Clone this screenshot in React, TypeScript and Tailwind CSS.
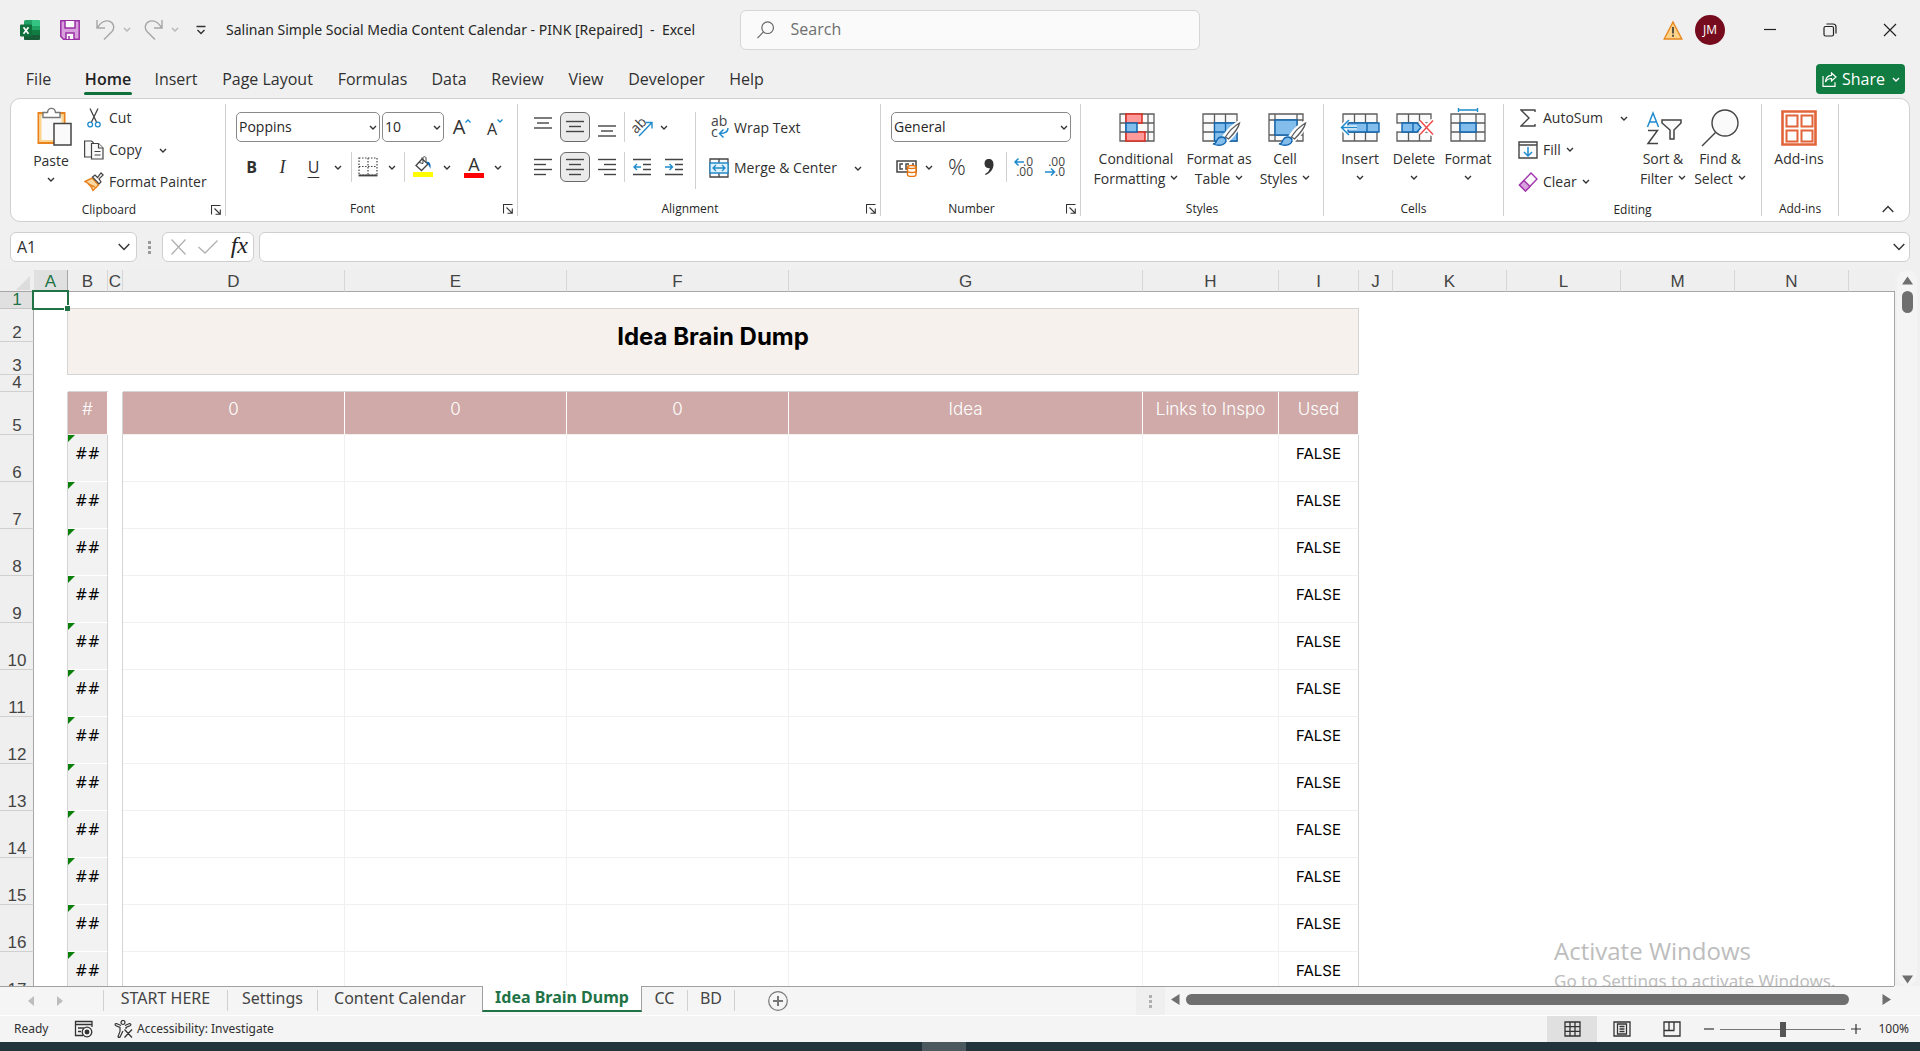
import type { ReactNode } from "react";
import clsx from "clsx";

const INK = "#444444";
const BLUE = "#1e8bcd";

const menuTabs = [
  { name: "File", width: "w-[49px] mr-[10px]" },
  { name: "Home", width: "w-[70px]", active: true },
  { name: "Insert", width: "w-[66px]" },
  { name: "Page Layout", width: "w-[117px]" },
  { name: "Formulas", width: "w-[93px]" },
  { name: "Data", width: "w-[60px]" },
  { name: "Review", width: "w-[77px]" },
  { name: "View", width: "w-[60px]" },
  { name: "Developer", width: "w-[101px]" },
  { name: "Help", width: "w-[59px]" },
];

const columns = [
  { name: "A", width: "w-[34px]" },
  { name: "B", width: "w-[40px]" },
  { name: "C", width: "w-[15px]" },
  { name: "D", width: "w-[222px]" },
  { name: "E", width: "w-[222px]" },
  { name: "F", width: "w-[222px]" },
  { name: "G", width: "w-[354px]" },
  { name: "H", width: "w-[136px]" },
  { name: "I", width: "w-[80px]" },
  { name: "J", width: "w-[34px]" },
  { name: "K", width: "w-[114px]" },
  { name: "L", width: "w-[114px]" },
  { name: "M", width: "w-[114px]" },
  { name: "N", width: "w-[114px]" },
];

const sheetTabs = [
  { name: "START HERE", width: "w-[124px]" },
  { name: "Settings", width: "w-[90px]" },
  { name: "Content Calendar", width: "w-[164px]" },
  { name: "Idea Brain Dump", width: "w-[160px]", active: true },
  { name: "CC", width: "w-[46px]" },
  { name: "BD", width: "w-[47px]" },
];

const headings = ["0", "0", "0", "Idea", "Links to Inspo", "Used"];
const dataRows = [6, 7, 8, 9, 10, 11, 12, 13, 14, 15, 16, 17];

function Chevron({ color = "#333333" }: { color?: string }) {
  return (
    <svg width="8" height="5" viewBox="0 0 8 5" fill="none" className="shrink-0">
      <path d="M1 1l3 3 3-3" stroke={color} strokeWidth="1.4" />
    </svg>
  );
}

function BigChevron({ up = false }: { up?: boolean }) {
  return (
    <svg width="12" height="8" viewBox="0 0 12 8" fill="none" className={clsx("shrink-0", up && "rotate-180")}>
      <path d="M0.7 1l5.3 5.4L11.3 1" stroke="#333333" strokeWidth="1.4" />
    </svg>
  );
}

function Drop({ label, className }: { label: string; className: string }) {
  return (
    <button aria-label={label} className={clsx("flex h-[30px] items-center justify-center", className)}>
      <Chevron />
    </button>
  );
}

function IconButton({
  label,
  className = "w-8",
  pressed = false,
  children,
}: {
  label: string;
  className?: string;
  pressed?: boolean;
  children: ReactNode;
}) {
  return (
    <button
      aria-label={label}
      className={clsx(
        "flex h-[30px] shrink-0 items-center justify-center",
        className,
        pressed && "rounded-md border border-[#6a6a6a] bg-[#ebebeb]",
      )}
    >
      {children}
    </button>
  );
}

function Divider({ className = "" }: { className?: string }) {
  return <div className={clsx("w-px shrink-0 bg-[#d1d1d1]", className)} />;
}

function Launcher({ label }: { label: string }) {
  return (
    <button aria-label={label} className="flex w-[18px] items-center justify-center">
      <svg width="10" height="10" viewBox="0 0 10 10" fill="none" stroke="#333333" strokeWidth="1.1">
        <path d="M0.5 9.5v-9h9M3.5 3.5l5.5 5.5M9.3 4.5v4.8H4.5" />
      </svg>
    </button>
  );
}

function Group({
  name,
  width,
  launcher = false,
  children,
}: {
  name: string;
  width: string;
  launcher?: boolean;
  children: ReactNode;
}) {
  return (
    <>
      <section aria-label={name} className={clsx("flex shrink-0 flex-col pt-[3px]", width)}>
        <div className="flex h-24">{children}</div>
        <div className="flex h-6 text-xs text-[#262626]">
          <span className="flex-1 text-center leading-6">{name}</span>
          {launcher && <Launcher label={`${name} settings`} />}
        </div>
      </section>
      <Divider className="my-[5px]" />
    </>
  );
}

function RowButton({ icon, text, drop }: { icon: ReactNode; text: string; drop?: string }) {
  return (
    <button className="flex h-8 items-center gap-[5px] whitespace-nowrap">
      <span className="flex w-5 justify-center">{icon}</span>
      <span>{text}</span>
      {drop && (
        <span className={drop}>
          <Chevron />
        </span>
      )}
    </button>
  );
}

function BigButton({
  icon,
  lines,
  width,
  drop = true,
}: {
  icon: ReactNode;
  lines: string[];
  width: string;
  drop?: boolean;
}) {
  return (
    <button className={clsx("flex shrink-0 flex-col items-center pt-[5px] leading-5 whitespace-nowrap", width)}>
      <span className="flex h-[42px] items-center justify-center">{icon}</span>
      {lines.length === 1 ? (
        <>
          <span>{lines[0]}</span>
          {drop && (
            <span className="flex h-4 items-center">
              <Chevron />
            </span>
          )}
        </>
      ) : (
        <>
          <span>{lines[0]}</span>
          <span className="flex items-center gap-[5px]">
            {lines[1]}
            <span className="pb-1">
              <Chevron />
            </span>
          </span>
        </>
      )}
    </button>
  );
}

function Combo({ label, value, width }: { label: string; value: string; width: string }) {
  return (
    <label className={clsx("relative flex h-[30px] shrink-0 items-center", width)}>
      <select
        aria-label={label}
        className="h-full w-full appearance-none rounded-[5px] border border-[#8a8a8a] bg-white pl-[2px] text-[#262626]"
      >
        <option>{value}</option>
      </select>
      <span className="pointer-events-none absolute right-[3px]">
        <Chevron />
      </span>
    </label>
  );
}

function Lines({ rows }: { rows: [number, number, number][] }) {
  return (
    <svg width="18" height="20" viewBox="0 0 18 20" stroke={INK} strokeWidth="1.4">
      {rows.map(([y, x1, x2]) => (
        <path key={y} d={`M${x1} ${y}H${x2}`} />
      ))}
    </svg>
  );
}

function IndentIcon({ right = false }: { right?: boolean }) {
  return (
    <svg width="18" height="20" viewBox="0 0 18 20" fill="none" strokeWidth="1.4">
      <path d="M0 2.5h18M10 7.5h8M10 12.5h8M0 17.5h18" stroke={INK} />
      <path d={right ? "M0 10h7.5M4.5 7l3 3-3 3" : "M8 10H0.8M4 7l-3 3 3 3"} stroke={BLUE} />
    </svg>
  );
}

function GridLines() {
  return (
    <g fill="#fafafa" stroke="#5c5c5c" strokeWidth="1.3">
      <path d="M1 3h34v27H1z" />
      <path d="M1 12h34M1 21h34M12.5 3v27M23.5 3v27" fill="none" />
    </g>
  );
}

function Brush() {
  return (
    <g>
      <path d="M38 11c-5 2-12 9-16 15l4 3c5-5 11-13 12-18z" fill="#ffffff" stroke="#ffffff" strokeWidth="4" />
      <path d="M37.5 12c-5 3-11 9-14 14l3 2c5-5 10-11 11-16z" fill="#ffffff" stroke="#5c5c5c" strokeWidth="1.3" />
      <path d="M11 33c3 0 3-2 4-4 2-4 8-4 9 0 0 4-5 7-13 4z" fill="#83bdec" stroke="#1166b0" strokeWidth="1.3" />
    </g>
  );
}

function TitleBar() {
  return (
    <header className="flex h-[60px] shrink-0 pb-[1px]">
      <div className="flex w-[740px] shrink-0 items-center pl-5">
        <svg width="20" height="20" viewBox="0 0 20 20">
          <rect x="4" width="16" height="20" rx="1.5" fill="#21a366" />
          <path d="M12 0h6.5A1.5 1.5 0 0 1 20 1.5V6h-8z" fill="#33c481" />
          <path d="M4 5h8v5H4z" fill="#107c41" />
          <path d="M12 10h8v8.5a1.5 1.5 0 0 1-1.5 1.5H5.5A1.5 1.5 0 0 1 4 18.5V10z" fill="#185c37" />
          <path d="M12 10h8v5h-8z" fill="#107c41" />
          <rect y="4.5" width="12" height="12" rx="1" fill="#0f703b" />
          <path d="M3.5 7.2l5 6.6M8.5 7.2l-5 6.6" stroke="#ffffff" strokeWidth="1.7" />
        </svg>
        <button aria-label="Save" className="ml-5">
          <svg width="20" height="20" viewBox="0 0 20 20" fill="#d8a0dc" stroke="#9a2fa5" strokeWidth="1.5">
            <path d="M0.8 0.8h18.4v18.4H3.5l-2.7-2.7z" />
            <path d="M5 1v7h10V1M6 19v-6h8v6" fill="#fafafa" />
            <path d="M9 16v3" />
          </svg>
        </button>
        <button aria-label="Undo" className="ml-4">
          <svg width="19" height="20" viewBox="0 0 19 20" fill="none" stroke="#a6a6a6" strokeWidth="1.4">
            <path d="M1 0v8h8M1.5 7.5C5 2 9 0 13 1.2c5 1.5 6 7 3 10.3L8 19.5" />
          </svg>
        </button>
        <button aria-label="Undo list" className="ml-2">
          <Chevron color="#b5b5b5" />
        </button>
        <button aria-label="Redo" className="ml-[13px]">
          <svg width="19" height="20" viewBox="0 0 19 20" fill="none" stroke="#a6a6a6" strokeWidth="1.4">
            <path d="M18 0v8h-8M17.5 7.5C14 2 10 0 6 1.2c-5 1.500-6 7-3 10.3L11 19.5" />
          </svg>
        </button>
        <button aria-label="Redo list" className="ml-2">
          <Chevron color="#b5b5b5" />
        </button>
        <button aria-label="Customize toolbar" className="ml-[17px]">
          <svg width="10" height="10" viewBox="0 0 10 10" fill="none" stroke="#333333" strokeWidth="1.4">
            <path d="M0.5 1.5h9M1.5 5L5 8.5 8.5 5" />
          </svg>
        </button>
        <h1 className="ml-5 pt-[1px] font-['Noto_Sans',sans-serif] text-sm whitespace-pre text-[#262626]">
          {"Salinan Simple Social Media Content Calendar - PINK [Repaired]  -  Excel"}
        </h1>
      </div>
      <label className="mt-[10px] flex h-10 w-[460px] min-w-0 items-center rounded-md border border-[#d6d6d6] bg-[#fafafa] pl-4">
        <svg width="19" height="20" viewBox="0 0 19 20" fill="none" stroke="#666666" strokeWidth="1.3">
          <circle cx="11.5" cy="7.5" r="6.3" />
          <path d="M7 12L0.5 18.8" />
        </svg>
        <input
          aria-label="Search"
          placeholder="Search"
          className="ml-4 w-full bg-transparent pb-[2px] text-base outline-none placeholder:text-[#6e6e6e]"
        />
      </label>
      <div className="ml-auto flex items-center">
        <button aria-label="Warning">
          <svg width="20" height="20" viewBox="0 0 20 20">
            <path d="M10 2l8.8 17H1.2z" fill="#fbd38a" stroke="#e8871e" strokeWidth="1.4" />
            <path d="M10 7v6.5M10 14.8v2" stroke="#333333" strokeWidth="1.6" />
          </svg>
        </button>
        <button className="ml-3 h-[30px] w-[30px] rounded-full bg-[#750b1c] text-xs text-white">JM</button>
        <button aria-label="Minimize" className="ml-[15px] flex h-10 w-[60px] items-center justify-center">
          <svg width="12" height="12" viewBox="0 0 12 12" stroke="#222222" strokeWidth="1.2">
            <path d="M0 5.5h12" />
          </svg>
        </button>
        <button aria-label="Restore" className="flex h-10 w-[60px] items-center justify-center">
          <svg width="14" height="14" viewBox="0 0 14 14" fill="none" stroke="#222222" strokeWidth="1.2">
            <rect x="1" y="3.5" width="9.5" height="9.5" rx="1.5" />
            <path d="M3.5 1h6.5a3 3 0 0 1 3 3v6.5" />
          </svg>
        </button>
        <button aria-label="Close" className="flex h-10 w-[60px] items-center justify-center">
          <svg width="14" height="14" viewBox="0 0 14 14" stroke="#222222" strokeWidth="1.2">
            <path d="M1 1l12 12M13 1L1 13" />
          </svg>
        </button>
      </div>
    </header>
  );
}

function MenuBar() {
  return (
    <nav className="flex h-[38px] shrink-0 pr-[15px] pl-[14px]">
      {menuTabs.map((tab) => (
        <button
          key={tab.name}
          className={clsx("flex flex-col items-center pt-[7px] text-base leading-6 text-[#303030]", tab.width)}
        >
          <span className={tab.active ? "font-semibold text-[#222222]" : ""}>{tab.name}</span>
          {tab.active && <span className="mt-[1px] h-[3px] w-12 rounded-sm bg-[#0f703b]" />}
        </button>
      ))}
      <button className="mt-1 ml-auto flex h-[30px] w-[89px] items-center rounded-[4px] bg-[#107c41] pl-[6px] text-base text-white">
        <svg width="15" height="15" viewBox="0 0 15 15" fill="none" stroke="#ffffff" strokeWidth="1.2">
          <path d="M1 4v10.3h12v-4M9.5 1l4.5 4-4.5 4V6.5C6 6.500 4.5 8 3.5 10c.2-4 2.5-6.5 6-6.7z" />
        </svg>
        <span className="ml-[5px] flex-1 text-left">Share</span>
        <span className="mr-[5px]">
          <Chevron color="#ffffff" />
        </span>
      </button>
    </nav>
  );
}

function ClipboardGroup() {
  return (
    <Group name="Clipboard" width="w-[214px]" launcher>
      <button className="ml-[15px] flex w-[50px] flex-col items-center pt-[5px]">
        <svg width="36" height="40" viewBox="0 0 36 40" fill="none" className="ml-[5px]">
          <path d="M2.5 6h26v30h-26z" fill="#fff" stroke="#e8821e" strokeWidth="2" />
          <path d="M4.5 8h22v26h-22z" fill="#fafafa" stroke="#fbd38a" strokeWidth="2" />
          <path d="M7 10.5V5.5h4.5c.5-5.5 7.5-5.5 8 0H24v5z" fill="#ffffff" stroke="#777777" strokeWidth="1.4" />
          <path d="M18 16.5h17V38H18z" fill="#fafafa" stroke="#444444" strokeWidth="1.5" />
        </svg>
        <span className="pt-1 leading-5">Paste</span>
        <span className="flex h-4 items-center">
          <Chevron />
        </span>
      </button>
      <div className="ml-2 flex flex-col">
        <RowButton
          text="Cut"
          icon={
            <svg width="14" height="20" viewBox="0 0 14 20" fill="none" strokeWidth="1.3">
              <path d="M3 0.5l6.5 13.5M11 0.5L4.5 14" stroke={INK} />
              <circle cx="3.2" cy="16.5" r="2.4" stroke={BLUE} />
              <circle cx="10.8" cy="16.5" r="2.4" stroke={BLUE} />
            </svg>
          }
        />
        <RowButton
          text="Copy"
          drop="ml-3"
          icon={
            <svg width="20" height="20" viewBox="0 0 20 20" fill="#fafafa" stroke={INK} strokeWidth="1.2">
              <path d="M7 17H0.6V1h7l2 2" />
              <path d="M7.5 3.5h7l4.5 4.5v11H7.5z" />
              <path d="M14.5 3.5V8H19M10.5 11.5h6M10.5 15h6" />
            </svg>
          }
        />
        <RowButton
          text="Format Painter"
          icon={
            <svg width="20" height="20" viewBox="0 0 20 20" fill="none">
              <path d="M1 9.5l7-3.5 6.500 7L9 18.5C7 13.5 4.5 11 1 9.5z" fill="#fbd9a4" stroke="#e8821e" strokeWidth="1.4" />
              <path d="M4 12l7 3" stroke="#e8821e" strokeWidth="1.4" />
              <path d="M8.5 5l2.5-2 2.5 2.5L17 1l2.2 2L15 6.8l2 3-2 2z" fill="#fafafa" stroke="#444444" strokeWidth="1.2" />
            </svg>
          }
        />
      </div>
    </Group>
  );
}

function FontGroup() {
  return (
    <Group name="Font" width="w-[291px]" launcher>
      <div className="flex flex-col gap-[10px] pt-[10px] pl-[10px]">
        <div className="flex gap-[2px]">
          <Combo label="Font name" value="Poppins" width="w-36" />
          <Combo label="Font size" value="10" width="w-[62px]" />
          <IconButton label="Increase font size" className="w-8">
            <span className="text-xl">A</span>
            <svg width="6" height="4" viewBox="0 0 6 4" fill="none" className="mb-3">
              <path d="M0.5 3.5L3 1l2.5 2.5" stroke={BLUE} strokeWidth="1.3" />
            </svg>
          </IconButton>
          <IconButton label="Decrease font size" className="w-[30px]">
            <span className="pt-1 text-base">A</span>
            <svg width="6" height="4" viewBox="0 0 6 4" fill="none" className="mb-3">
              <path d="M0.5 0.5L3 3l2.5-2.5" stroke={BLUE} strokeWidth="1.3" />
            </svg>
          </IconButton>
        </div>
        <div className="flex">
          <IconButton label="Bold" className="w-[31px]">
            <span className="text-base font-bold">B</span>
          </IconButton>
          <IconButton label="Italic" className="w-[31px]">
            <span className="font-['Liberation_Serif',serif] text-lg italic">I</span>
          </IconButton>
          <IconButton label="Underline" className="w-[31px]">
            <span className="text-base underline underline-offset-4">U</span>
          </IconButton>
          <Drop label="Underline styles" className="w-[18px]" />
          <Divider className="mx-1" />
          <IconButton label="Borders" className="w-6">
            <svg width="20" height="20" viewBox="0 0 20 20" fill="none" stroke={INK} strokeWidth="1.2">
              <path d="M1 1h18v17H1zM10 1v17M1 9.5h18" strokeDasharray="1.5 1.5" />
              <path d="M0.5 18.5h19" strokeWidth="1.8" />
            </svg>
          </IconButton>
          <Drop label="Border styles" className="w-6" />
          <Divider />
          <IconButton label="Fill color" className="w-9">
            <svg width="20" height="22" viewBox="0 0 20 22" fill="none">
              <path d="M9 3L3 9.5l5.5 5L15 8 9 3V1.5" stroke={INK} strokeWidth="1.3" />
              <path d="M6 6.5l4 1V2c0-2 3-1.5 3 0v4" stroke={INK} strokeWidth="1" />
              <path d="M13 6c4-1 5 2 4.5 7-1-2-1.5-4-4.5-7z" fill="#1166b0" />
              <path d="M0 16h20v5H0z" fill="#ffff00" />
            </svg>
          </IconButton>
          <Drop label="Fill colors" className="w-3" />
          <IconButton label="Font color" className="ml-[3px] w-9 flex-col">
            <span className="text-lg leading-4">A</span>
            <span className="mt-[1px] h-[5px] w-5 bg-[#ff0000]" />
          </IconButton>
          <Drop label="Font colors" className="w-3" />
        </div>
      </div>
    </Group>
  );
}

function AlignmentGroup() {
  return (
    <Group name="Alignment" width="w-[362px]" launcher>
      <div className="flex flex-col gap-[10px] pt-[10px] pl-[9px]">
        <div className="flex">
          <IconButton label="Top align">
            <Lines rows={[[1, 0, 18], [6, 3, 15], [11, 0, 18]]} />
          </IconButton>
          <IconButton label="Middle align" pressed className="mx-[1px] w-[30px]">
            <Lines rows={[[4.5, 0, 18], [9.5, 3, 15], [14.5, 0, 18]]} />
          </IconButton>
          <IconButton label="Bottom align">
            <Lines rows={[[9, 0, 18], [14, 3, 15], [19, 0, 18]]} />
          </IconButton>
          <Divider className="mx-[1px]" />
          <IconButton label="Orientation">
            <svg width="22" height="20" viewBox="0 0 22 20" fill="none" className="overflow-visible">
              <text x="2" y="16" fontSize="14" fill={INK} transform="rotate(-45 5 13)">
                ab
              </text>
              <path d="M8 19L20.5 6M15 5.5h6v6" stroke={BLUE} strokeWidth="1.4" />
            </svg>
          </IconButton>
          <Drop label="Orientation styles" className="w-3" />
        </div>
        <div className="flex">
          <IconButton label="Align left">
            <Lines rows={[[2.5, 0, 18], [7.5, 0, 12], [12.5, 0, 18], [17.5, 0, 12]]} />
          </IconButton>
          <IconButton label="Center" pressed className="mx-[1px] w-[30px]">
            <Lines rows={[[2.5, 0, 18], [7.5, 3, 15], [12.5, 0, 18], [17.5, 3, 15]]} />
          </IconButton>
          <IconButton label="Align right">
            <Lines rows={[[2.5, 0, 18], [7.5, 6, 18], [12.5, 0, 18], [17.5, 6, 18]]} />
          </IconButton>
          <Divider className="mx-[1px]" />
          <IconButton label="Decrease indent">
            <IndentIcon />
          </IconButton>
          <IconButton label="Increase indent">
            <IndentIcon right />
          </IconButton>
        </div>
      </div>
      <Divider className="mt-[10px] mb-2 ml-[5px]" />
      <div className="ml-[13px] flex flex-col gap-2 pt-[10px]">
        <RowButton
          text="Wrap Text"
          icon={
            <svg width="20" height="22" viewBox="0 0 20 22" fill="none" className="overflow-visible">
              <text x="2" y="9" fontSize="14" fill={INK}>
                ab
              </text>
              <text x="2" y="20" fontSize="14" fill={INK}>
                c
              </text>
              <path d="M19 11c0 4-3 5.5-8 5.5M14.5 12.5l-4 4 4 4" stroke={BLUE} strokeWidth="1.5" />
            </svg>
          }
        />
        <RowButton
          text="Merge & Center"
          drop="ml-3"
          icon={
            <svg width="20" height="20" viewBox="0 0 20 20" fill="#fafafa" strokeWidth="1.3">
              <path d="M1 1h18v18H1zM10 1v18" stroke={INK} />
              <path d="M1 5h18v10H1z" fill="#e4f1fb" stroke={BLUE} />
              <path d="M4 10h12M7 7l-3 3 3 3M13 7l3 3-3 3" fill="none" stroke={BLUE} />
            </svg>
          }
        />
      </div>
    </Group>
  );
}

function DecimalIcon({ increase = false }: { increase?: boolean }) {
  return (
    <svg width="22" height="22" viewBox="0 0 22 22" fill="none" className="overflow-visible">
      <text x="20" y="10" fontSize="12" textAnchor="end" fill={INK}>
        {increase ? ".0" : ".00"}
      </text>
      <text x="20" y="20" fontSize="12" textAnchor="end" fill={INK}>
        {increase ? ".00" : ".0"}
      </text>
      <path
        d={increase ? "M11 6H2M5.5 2.5L2 6l3.5 3.5" : "M0 16h9.5M6 12.5l3.5 3.5L6 19.5"}
        stroke={BLUE}
        strokeWidth="1.5"
      />
    </svg>
  );
}

function NumberGroup() {
  return (
    <Group name="Number" width="w-[199px]" launcher>
      <div className="flex flex-col gap-[10px] pt-[10px] pl-[10px]">
        <Combo label="Number format" value="General" width="w-[180px]" />
        <div className="flex">
          <IconButton label="Accounting format">
            <svg width="22" height="20" viewBox="0 0 22 20" fill="none">
              <path d="M1 4h19v11H1z" stroke={INK} strokeWidth="1.5" />
              <path d="M7 7H4v5h3M13 7h-3v5h1M16 7h2" stroke={INK} strokeWidth="1.4" />
              <path d="M11.5 10c0-2 8.5-2 8.5 0v8c0 2-8.5 2-8.5 0z" fill="#fff" stroke="#e8740c" strokeWidth="1.4" />
              <path d="M11.5 10c0 2 8.5 2 8.5 0M11.5 14c0 2 8.5 2 8.5 0" stroke="#e8740c" strokeWidth="1.4" />
            </svg>
          </IconButton>
          <Drop label="Accounting formats" className="w-3" />
          <IconButton label="Percent style" className="ml-[6px] w-8">
            <span className="text-[22px] font-light">%</span>
          </IconButton>
          <IconButton label="Comma style">
            <svg width="10" height="17" viewBox="0 0 10 17">
              <path d="M4.5 0C8 0 9.5 2 9.5 5.5 9.5 10 6.5 14 1.5 16l-.5-1c3-1.5 4.5-3.5 4.7-6C3 9.7 0.5 8 0.5 4.5.5 2 2 0 4.5 0z" fill="#333333" />
            </svg>
          </IconButton>
          <Divider className="mx-[1px]" />
          <IconButton label="Increase decimal">
            <DecimalIcon increase />
          </IconButton>
          <IconButton label="Decrease decimal">
            <DecimalIcon />
          </IconButton>
        </div>
      </div>
    </Group>
  );
}

function StylesGroup() {
  return (
    <Group name="Styles" width="w-[242px]">
      <BigButton
        width="ml-2 w-[94px]"
        lines={["Conditional", "Formatting"]}
        icon={
          <svg width="36" height="34" viewBox="0 0 36 34" className="ml-[2px]">
            <path d="M1 3h34v27H1zM1 12h34M1 21h34M7 3v27M29 3v27" fill="#fafafa" stroke="#5c5c5c" strokeWidth="1.3" />
            <path d="M7 3h16v9H7zM7 21h19v9H7z" fill="#ff9a9a" stroke="#d92c20" strokeWidth="1.5" />
            <path d="M7 12h11v9H7z" fill="#83bdec" stroke="#1166b0" strokeWidth="1.5" />
          </svg>
        }
      />
      <BigButton
        width="w-[72px]"
        lines={["Format as", "Table"]}
        icon={
          <svg width="40" height="36" viewBox="0 0 40 36" className="mt-[2px] ml-[5px]">
            <GridLines />
            <path d="M12.5 12H35v18H12.5z" fill="#83bdec" stroke="#1166b0" strokeWidth="1.3" />
            <path d="M12.5 21H35M23.5 12v18" stroke="#1166b0" strokeWidth="1.3" />
            <Brush />
          </svg>
        }
      />
      <BigButton
        width="w-[60px]"
        lines={["Cell", "Styles"]}
        icon={
          <svg width="40" height="36" viewBox="0 0 40 36" className="mt-[2px] ml-[5px]">
            <path d="M1 3h34v27H1zM1 9h34M1 24h34M7 3v27M29 3v27" fill="#fafafa" stroke="#5c5c5c" strokeWidth="1.3" />
            <path d="M7 9h22v15H7z" fill="#83bdec" stroke="#1166b0" strokeWidth="1.4" />
            <Brush />
          </svg>
        }
      />
    </Group>
  );
}

function CellsGroup() {
  return (
    <Group name="Cells" width="w-[179px]">
      <BigButton
        width="ml-[9px] w-[54px]"
        lines={["Insert"]}
        icon={
          <svg width="40" height="34" viewBox="0 0 40 34" fill="none">
            <g transform="translate(2 0)">
              <GridLines />
            </g>
            <path d="M8 12h31v9H8z" fill="#83bdec" stroke="#1166b0" strokeWidth="1.4" />
            <path d="M27 12v9" stroke="#1166b0" strokeWidth="1.4" />
            <path d="M9 8L1 16.5 9 25M1 16.5h16" stroke="#ffffff" strokeWidth="4" />
            <path d="M9 9L1.5 16.5 9 24M1.5 16.5H17" stroke={BLUE} strokeWidth="1.5" />
          </svg>
        }
      />
      <BigButton
        width="w-[54px]"
        lines={["Delete"]}
        icon={
          <svg width="38" height="34" viewBox="0 0 38 34" fill="none" className="ml-[2px]">
            <GridLines />
            <path d="M0 12.7h38v7.6H0z" fill="#ffffff" />
            <path d="M6 12h15l4 4.5-4 4.5H6z" fill="#83bdec" stroke="#1166b0" strokeWidth="1.4" />
            <path d="M17 12v9" stroke="#1166b0" strokeWidth="1.4" />
            <path d="M24 9.5l13 14M37 9.5l-13 14" stroke="#ffffff" strokeWidth="5" />
            <path d="M24 9.5l13 14M37 9.5l-13 14" stroke="#f04a4a" strokeWidth="1.5" />
          </svg>
        }
      />
      <BigButton
        width="w-[54px]"
        lines={["Format"]}
        icon={
          <svg width="36" height="40" viewBox="0 0 36 40" fill="none">
            <g transform="translate(0 3)">
              <path d="M1 3h34v27H1zM1 12h34M1 21h34M10 3v27M26 3v27" fill="#fafafa" stroke="#5c5c5c" strokeWidth="1.3" />
              <path d="M10 12h16v9H10z" fill="#83bdec" stroke="#1166b0" strokeWidth="1.4" />
            </g>
            <path d="M8.5 0v4M27.5 0v4M8.5 2h19" stroke={BLUE} strokeWidth="1.4" />
          </svg>
        }
      />
    </Group>
  );
}

function EditingGroup() {
  return (
    <Group name="Editing" width="w-[257px]">
      <div className="ml-[14px] flex w-[116px] flex-col">
        <RowButton
          text="AutoSum"
          drop="ml-3"
          icon={
            <svg width="16" height="18" viewBox="0 0 16 18" fill="none" stroke={INK} strokeWidth="1.4">
              <path d="M15 3V1H1l8 8-8 8h14v-2" />
            </svg>
          }
        />
        <RowButton
          text="Fill"
          drop="pb-[2px]"
          icon={
            <svg width="20" height="18" viewBox="0 0 20 18" fill="#fafafa">
              <path d="M1 1h18v16H1zM1 4h18" stroke={INK} strokeWidth="1.4" />
              <path d="M10 6v9M6 11l4 4 4-4" fill="none" stroke={BLUE} strokeWidth="1.5" />
            </svg>
          }
        />
        <RowButton
          text="Clear"
          drop="pb-[2px]"
          icon={
            <svg width="20" height="20" viewBox="0 0 20 20" fill="#fafafa" stroke="#a234ad" strokeWidth="1.4">
              <path d="M13 1l6 6L7.5 19l-6-6z" />
              <path d="M6 8.5l6 6L7.5 19l-6-6z" fill="#d8a0dc" />
            </svg>
          }
        />
      </div>
      <BigButton
        width="w-[58px]"
        lines={["Sort &", "Filter"]}
        icon={
          <svg width="36" height="36" viewBox="0 0 36 36" fill="none" strokeWidth="1.5" className="ml-[2px]">
            <path d="M1.5 17L7 3l5.5 14M3.5 12h7" stroke={BLUE} />
            <path d="M2 20.5h9.5L2 33.500h10" stroke={INK} />
            <path d="M16 10h19v3l-7 7v9h-4v-9l-8-7z" fill="#fafafa" stroke={INK} />
          </svg>
        }
      />
      <BigButton
        width="w-[56px]"
        lines={["Find &", "Select"]}
        icon={
          <svg width="38" height="38" viewBox="0 0 38 38" fill="none" stroke={INK} strokeWidth="1.4">
            <circle cx="24" cy="14" r="13" fill="#fafafa" />
            <path d="M14.5 23.5L1 37" />
          </svg>
        }
      />
    </Group>
  );
}

function Ribbon() {
  return (
    <div className="mx-[10px] flex h-[124px] shrink-0 rounded-[10px] border border-[#cfcfcf] bg-white text-sm text-[#303030]">
      <ClipboardGroup />
      <FontGroup />
      <AlignmentGroup />
      <NumberGroup />
      <StylesGroup />
      <CellsGroup />
      <EditingGroup />
      <Group name="Add-ins" width="w-[76px]">
        <BigButton
          width="w-[74px]"
          lines={["Add-ins"]}
          drop={false}
          icon={
            <svg width="36" height="36" viewBox="0 0 36 36" fill="#ffffff">
              <path d="M1.5 1.5h33v33h-33z" stroke="#e2643a" strokeWidth="2.6" />
              <path d="M5.5 5.5h11v11h-11zM20.5 5.5h11v11h-11zM5.5 20.5h11v11h-11zM20.5 20.5h11v11h-11z" stroke="#e2643a" strokeWidth="2" />
            </svg>
          }
        />
      </Group>
      <button aria-label="Collapse ribbon" className="mt-auto mr-[15px] mb-2 ml-auto">
        <BigChevron up />
      </button>
    </div>
  );
}

function FormulaBar() {
  const box = "flex h-full items-center rounded-[6px] border border-[#cfcfcf] bg-white";
  return (
    <div className="mx-[10px] mt-[10px] flex h-[30px] shrink-0">
      <div className={clsx(box, "w-[127px] shrink-0 pr-[6px] pl-[6px]")}>
        <input aria-label="Name box" defaultValue="A1" className="w-full min-w-0 text-base text-[#303030] outline-none" />
        <BigChevron />
      </div>
      <div className="flex w-[25px] shrink-0 flex-col items-center justify-center gap-[2px]">
        <span className="h-[3px] w-[3px] bg-[#9a9a9a]" />
        <span className="h-[3px] w-[3px] bg-[#9a9a9a]" />
        <span className="h-[3px] w-[3px] bg-[#9a9a9a]" />
      </div>
      <div className={clsx(box, "w-[92px] shrink-0 justify-between pr-[5px] pl-2")}>
        <button aria-label="Cancel">
          <svg width="15" height="16" viewBox="0 0 15 16" stroke="#b0b0b0" strokeWidth="1.3">
            <path d="M0.5 0.5l14 15M14.5 0.5l-14 15" />
          </svg>
        </button>
        <button aria-label="Enter">
          <svg width="20" height="14" viewBox="0 0 20 14" fill="none" stroke="#b0b0b0" strokeWidth="1.3">
            <path d="M0.5 7L7 13 19.5 0.5" />
          </svg>
        </button>
        <button className="pb-1 font-['Liberation_Serif',serif] text-2xl leading-6 text-[#222222] italic">fx</button>
      </div>
      <div className={clsx(box, "ml-[5px] flex-1 pr-1 pl-2")}>
        <input aria-label="Formula" className="flex-1 outline-none" />
        <BigChevron />
      </div>
    </div>
  );
}

function RowHead({ n, height, active = false }: { n: number; height: string; active?: boolean }) {
  return (
    <th
      scope="row"
      className={clsx(
        "overflow-hidden border-r border-b border-r-[#a6a6a6] p-0 pb-[1px] pl-[1px] align-bottom text-[17px] leading-[15px] font-normal",
        active ? "border-b-[#c4c4c4] bg-[#e0e0e0] text-[#217346]" : "border-b-[#d0d0d0] bg-[#efefef] text-[#444444]",
        height,
      )}
    >
      {n}
    </th>
  );
}

function Sheet() {
  const edge = "border-[#d4d4d4]";
  const inner = "border-r border-b border-[#f0f0f0]";
  const heading =
    "border-r border-b border-r-white border-b-[#f4f0f0] bg-[#d0aaa8] p-0 pb-[7px] font-['Inter',sans-serif] text-[17px] font-light text-white";

  return (
    <div className="flex min-h-0 flex-1">
      <div className="relative min-w-0 flex-1 overflow-hidden bg-white">
        <table className="w-full table-fixed border-separate border-spacing-0 font-['Liberation_Sans',sans-serif]">
          <colgroup>
            <col className="w-[34px]" />
            {columns.map((col) => (
              <col key={col.name} className={col.width} />
            ))}
            <col />
          </colgroup>
          <thead>
            <tr className="h-[22px] text-[17px] leading-[19px] text-[#444444]">
              <td className="border-b border-[#a6a6a6] bg-[#efefef] p-0">
                <svg width="14" height="14" viewBox="0 0 14 14" className="mt-1 ml-4">
                  <path d="M14 0v14H0z" fill="#dcdcdc" />
                </svg>
              </td>
              {columns.map((col) => (
                <th
                  key={col.name}
                  scope="col"
                  className={clsx(
                    "border-r border-b border-b-[#a6a6a6] p-0 pt-[2px] text-center font-normal",
                    col.name === "A" ? "border-r-[#a6a6a6] bg-[#e0e0e0] text-[#217346]" : "border-r-[#d6d6d6] bg-[#efefef]",
                  )}
                >
                  {col.name}
                </th>
              ))}
              <td className="border-b border-[#a6a6a6] bg-[#efefef]" />
            </tr>
          </thead>
          <tbody>
            <tr>
              <RowHead n={1} height="h-[17px]" active />
              <td />
              <td colSpan={8} className={clsx("border-b", edge)} />
              <td colSpan={6} />
            </tr>
            <tr>
              <RowHead n={2} height="h-[33px]" />
              <td rowSpan={2} className={clsx("border-r", edge)} />
              <td
                rowSpan={2}
                colSpan={8}
                className={clsx(
                  "border-r border-b bg-[#f7f1ee] p-0 pb-[10px] text-center font-['Inter',sans-serif] text-2xl leading-7 font-bold text-black",
                  edge,
                )}
              >
                Idea Brain Dump
              </td>
              <td rowSpan={2} colSpan={6} />
            </tr>
            <tr>
              <RowHead n={3} height="h-[33px]" />
            </tr>
            <tr>
              <RowHead n={4} height="h-[17px]" />
              <td />
              <td className={clsx("border-b", edge)} />
              <td />
              <td colSpan={6} className={clsx("border-b", edge)} />
              <td colSpan={6} />
            </tr>
            <tr>
              <RowHead n={5} height="h-[43px]" />
              <td className={clsx("border-r", edge)} />
              <th className={heading}>#</th>
              <td className={clsx("border-r", edge)} />
              {headings.map((text, i) => (
                <th key={i} className={heading}>
                  {text}
                </th>
              ))}
              <td colSpan={6} />
            </tr>
            {dataRows.map((n) => (
              <tr key={n}>
                <RowHead n={n} height="h-[47px]" />
                <td className={clsx("border-r", edge)} />
                <td className="relative border-r border-b border-r-[#d4d4d4] border-b-white bg-[#f2f2f2] p-0 pb-[7px] text-center font-['DejaVu_Sans',sans-serif] text-[15px] text-black">
                  <svg width="7" height="7" viewBox="0 0 7 7" className="absolute top-0 left-0">
                    <path d="M0 0h7L0 7z" fill="#0a800a" />
                  </svg>
                  ##
                </td>
                <td className={clsx("border-r", edge)} />
                <td className={inner} />
                <td className={inner} />
                <td className={inner} />
                <td className={inner} />
                <td className={inner} />
                <td className="border-r border-b border-r-[#d4d4d4] border-b-[#f0f0f0] p-0 pb-[7px] text-center font-['Inter',sans-serif] text-[15px] text-black">
                  FALSE
                </td>
                <td colSpan={6} />
              </tr>
            ))}
          </tbody>
        </table>
        {/* active cell outline with its fill handle */}
        <div className="absolute top-[20px] left-[32px] h-5 w-[37px] border-2 border-[#217346]">
          <span className="absolute -right-[3px] -bottom-[3px] h-[6px] w-[6px] border-t border-l border-white bg-[#217346]" />
        </div>
        <div className="absolute right-[55px] bottom-[-7px] w-[285px] whitespace-nowrap text-[#bdbdbd]">
          <p className="text-2xl leading-9">Activate Windows</p>
          <p className="font-['Noto_Sans',sans-serif] text-[17px] leading-6">Go to Settings to activate Windows.</p>
        </div>
      </div>
      <div className="flex w-[26px] shrink-0">
        <div className="mt-[21px] w-px bg-[#a6a6a6]" />
        <div className="ml-[2px] flex w-5 flex-col items-center rounded-full bg-[#f4f4f4] pt-[6px] pb-[2px]">
          <svg width="11" height="9" viewBox="0 0 11 9">
            <path d="M5.5 0.5L11 8.5H0z" fill="#6f6f6f" />
          </svg>
          <div className="mt-[6px] h-[22px] w-[11px] rounded-full bg-[#6f6f6f]" />
          <svg width="11" height="9" viewBox="0 0 11 9" className="mt-auto">
            <path d="M5.5 8.5L11 0.5H0z" fill="#6f6f6f" />
          </svg>
        </div>
      </div>
    </div>
  );
}

function SheetTabs() {
  return (
    <div className="flex h-[30px] shrink-0 border-b border-white bg-[#f5f5f5] font-['Noto_Sans',sans-serif] text-base text-[#444444]">
      <div className="flex min-w-0 flex-1 border-t border-[#a0a0a0]">
        <div className="flex w-[103px] shrink-0 items-center gap-[23px] pl-7">
          <button aria-label="Previous sheet">
            <svg width="6" height="10" viewBox="0 0 6 10">
              <path d="M6 0v10L0 5z" fill="#bdbdbd" />
            </svg>
          </button>
          <button aria-label="Next sheet">
            <svg width="6" height="10" viewBox="0 0 6 10">
              <path d="M0 0v10l6-5z" fill="#bdbdbd" />
            </svg>
          </button>
        </div>
        <Divider className="mt-[3px] mb-1 bg-[#a6a6a6]" />
        {sheetTabs.map((tab) => (
          <div key={tab.name} className={clsx("flex shrink-0", tab.width)}>
            <button
              className={clsx(
                "flex-1 leading-5 whitespace-nowrap",
                tab.active
                  ? "-mt-px mb-[3px] border-x border-b-2 border-x-[#a0a0a0] border-b-[#217346] bg-white pb-[2px] font-bold text-[#217346]"
                  : "pb-[7px]",
              )}
            >
              {tab.name}
            </button>
            {!tab.active && tab.name !== "Content Calendar" && <Divider className="mt-[3px] mb-1 bg-[#a6a6a6]" />}
          </div>
        ))}
        <button aria-label="New sheet" className="ml-[33px]">
          <svg width="20" height="20" viewBox="0 0 20 20" fill="none" stroke="#777777">
            <circle cx="10" cy="10" r="9.3" strokeWidth="1.2" />
            <path d="M10 5v10M5 10h10" strokeWidth="2" />
          </svg>
        </button>
      </div>
      <div className="flex w-[784px] shrink-0">
        <div className="flex w-[29px] flex-col items-center justify-center gap-[2px] border-t border-[#a0a0a0] bg-[#efefef]">
          <span className="h-[3px] w-[3px] bg-[#b0b0b0]" />
          <span className="h-[3px] w-[3px] bg-[#b0b0b0]" />
          <span className="h-[3px] w-[3px] bg-[#b0b0b0]" />
        </div>
        <div className="flex flex-1 items-center border-t border-[#a0a0a0] pb-[3px] pl-[6px]">
          <svg width="9" height="11" viewBox="0 0 9 11">
            <path d="M8.5 0v11L0 5.5z" fill="#6f6f6f" />
          </svg>
          <div className="ml-[6px] h-[11px] flex-1 rounded-full bg-[#6f6f6f]" />
          <div className="w-[45px]" />
        </div>
        <div className="flex w-[26px] items-center pb-[3px]">
          <svg width="9" height="11" viewBox="0 0 9 11" className="-ml-3">
            <path d="M0.5 0v11L9 5.5z" fill="#6f6f6f" />
          </svg>
        </div>
      </div>
    </div>
  );
}

function StatusBar() {
  return (
    <footer className="flex h-[26px] shrink-0 items-center bg-[#f4f4f4] pr-[11px] pl-[14px] font-['Noto_Sans',sans-serif] text-xs text-[#303030]">
      <span className="w-[60px]">Ready</span>
      <button aria-label="Record macro">
        <svg width="20" height="18" viewBox="0 0 20 18" fill="none" stroke="#333333" strokeWidth="1.3">
          <path d="M9 15.5H1.5V1.5H18V7M1.5 4.5H18M4 8h6M4 11.5h3" />
          <circle cx="13" cy="12" r="4.8" />
          <circle cx="13" cy="12" r="1.8" fill="#333333" />
        </svg>
      </button>
      <button className="ml-5 flex items-center gap-[3px]">
        <svg width="20" height="18" viewBox="0 0 20 18" fill="none" stroke="#333333" strokeWidth="1.2">
          <circle cx="9" cy="2.5" r="2" />
          <path d="M7 5.5L2.5 3.5c-2 0-1.5 1.8-.5 2.2L6 7.5v4l-2 5c0 1.5 2 1 2.3 0L9 11M11 5.5l4.500-2c2 0 1.5 1.8.5 2.2L12 7.5V9M10.5 9.5l7.5 8M18 9.5l-7.5 8" />
        </svg>
        Accessibility: Investigate
      </button>
      <div className="ml-auto flex h-full items-center">
        <button aria-label="Normal view" className="flex h-full w-[50px] items-center justify-center bg-[#e0e0e0]">
          <svg width="17" height="16" viewBox="0 0 17 16" fill="none" stroke="#333333" strokeWidth="1.3">
            <path d="M1 1h15v14H1zM6 1v14M11 1v14M1 5.7h15M1 10.3h15" />
          </svg>
        </button>
        <button aria-label="Page layout view" className="flex h-full w-[50px] items-center justify-center">
          <svg width="18" height="16" viewBox="0 0 18 16" fill="none" stroke="#333333" strokeWidth="1.3">
            <path d="M1 1h16v14H1zM4.5 3h9v10h-9zM6.5 5.5h5M6.5 8h5M6.5 10.5h5" />
          </svg>
        </button>
        <button aria-label="Page break view" className="flex h-full w-[50px] items-center justify-center">
          <svg width="18" height="16" viewBox="0 0 18 16" fill="none" stroke="#333333" strokeWidth="1.3">
            <path d="M1 1h16v14H1zM6 1v8M11 1v8M1 9.5h10.5" />
          </svg>
        </button>
        <button aria-label="Zoom out" className="ml-[7px]">
          <svg width="10" height="10" viewBox="0 0 10 10" stroke="#333333" strokeWidth="1.2">
            <path d="M0 5h10" />
          </svg>
        </button>
        <input
          type="range"
          aria-label="Zoom"
          defaultValue={50}
          className="mx-[6px] h-[15px] w-[125px] appearance-none bg-transparent [&::-webkit-slider-runnable-track]:h-px [&::-webkit-slider-runnable-track]:bg-[#777777] [&::-webkit-slider-thumb]:-mt-[7px] [&::-webkit-slider-thumb]:h-[15px] [&::-webkit-slider-thumb]:w-[6px] [&::-webkit-slider-thumb]:appearance-none [&::-webkit-slider-thumb]:bg-[#555555]"
        />
        <button aria-label="Zoom in">
          <svg width="10" height="10" viewBox="0 0 10 10" stroke="#333333" strokeWidth="1.2">
            <path d="M0 5h10M5 0v10" />
          </svg>
        </button>
        <button className="w-12 text-right">100%</button>
      </div>
    </footer>
  );
}

export default function App() {
  return (
    <div className="flex h-screen flex-col overflow-hidden bg-[#f0f0f0] font-['Open_Sans',sans-serif]">
      <TitleBar />
      <MenuBar />
      <Ribbon />
      <FormulaBar />
      <div className="mt-2 flex min-h-0 flex-1 flex-col">
        <Sheet />
        <SheetTabs />
      </div>
      <StatusBar />
      <div className="flex h-[9px] shrink-0 bg-[#22333b] pl-[48%]">
        <div className="w-[44px] bg-[#4b595f]" />
      </div>
    </div>
  );
}
